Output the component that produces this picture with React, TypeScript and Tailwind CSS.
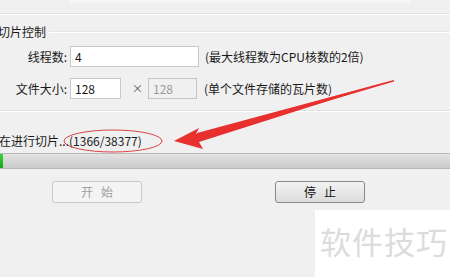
import React from 'react';

const font = { fontFamily: '"Noto Sans CJK SC", "Microsoft YaHei", sans-serif' };

const App: React.FC = () => {
  return (
    <div
      className="relative w-[450px] h-[277px] overflow-hidden bg-[#f0f0f0] text-[12px] text-[#1a1a1a]"
      style={font}
    >
      {/* top edge of previous control */}
      <div className="h-[3px] ml-[70px] w-[340px] bg-[#f6f6f6]" />
      <div className="h-[10px]" />
      <div className="h-px bg-[#dce2e8]" />
      <div className="h-px bg-white" />

      {/* group title */}
      <div className="flex items-center h-[15px] mt-[9px]">
        <span className="leading-[15px] -ml-[2px]">切片控制</span>
        <div className="flex-1 ml-[3px] mt-[1px]">
          <div className="h-px bg-[#dfe6ec]" />
          <div className="h-px bg-white" />
        </div>
      </div>

      {/* thread count */}
      <div className="flex items-center h-[21px] mt-[7px]">
        <span className="w-[67px] text-right leading-[21px]">线程数:</span>
        <div className="ml-[3px] w-[129px] h-[21px] bg-white border border-[#c9c9c9] flex items-center pl-[4px]">
          4
        </div>
        <span className="ml-[6px]">(最大线程数为CPU核数的2倍)</span>
      </div>

      {/* file size */}
      <div className="flex items-center h-[21px] mt-[11px]">
        <span className="w-[67px] text-right leading-[21px]">文件大小:</span>
        <div className="ml-[3px] w-[51px] h-[21px] bg-white border border-[#c9c9c9] flex items-center pl-[4px]">
          128
        </div>
        <span className="ml-[11px] w-[16px] text-[11px] text-[#555]">×</span>
        <div className="w-[49px] h-[21px] bg-[#f0f0f0] border border-[#c4c4c4] flex items-center pl-[4px] text-[#9a9a9a]">
          128
        </div>
        <span className="ml-[7px]">(单个文件存储的瓦片数)</span>
      </div>

      {/* separator */}
      <div className="mt-[11px] h-px bg-[#dce2e8]" />
      <div className="h-px bg-white" />

      {/* status */}
      <div className="mt-[21px] h-[16px] leading-[16px] -ml-[1px]">在进行切片...(1366/38377)</div>

      {/* progress bar */}
      <div className="mt-[4px] h-[16px] border-y border-[#b8b8b8] bg-gradient-to-b from-[#e4e4e4] via-[#d6d6d6] to-[#cbcbcb] flex">
        <div className="w-[3px] h-full bg-gradient-to-b from-[#3dd23d] to-[#0fa80f]" />
      </div>

      {/* buttons */}
      <div className="flex mt-[12px]">
        <button
          disabled
          className="ml-[52px] w-[90px] h-[22px] rounded-[3px] border border-[#c8c8c8] bg-[#f4f4f4] text-[#a0a0a0] tracking-[8px] pl-[8px]"
        >
          开始
        </button>
        <button className="ml-[133px] w-[90px] h-[22px] rounded-[3px] border border-[#8a8a8a] bg-gradient-to-b from-[#f3f3f3] to-[#dcdcdc] text-[#111] tracking-[8px] pl-[8px]">
          停止
        </button>
      </div>

      {/* annotation: ellipse + arrow */}
      <svg className="absolute left-0 top-0 pointer-events-none" width="450" height="277">
        <ellipse cx="113" cy="141" rx="49" ry="11" fill="none" stroke="#d64545" strokeWidth="1" />
        <path d="M394 80 L196 134 L199 128 L174 141 L203 149 L199 142 Z" fill="#e8302f" />
        <path d="M394 80 L394 81.5 L199 139 L197 133 Z" fill="#e8302f" />
      </svg>

      {/* watermark */}
      <div className="absolute left-[315px] top-[210px] w-[135px] h-[67px] bg-white flex items-center pl-[5px]">
        <span className="text-[31px] text-[#dcdcdc] tracking-[1px] -mt-[4px]">软件技巧</span>
      </div>
    </div>
  );
};

export default App;
